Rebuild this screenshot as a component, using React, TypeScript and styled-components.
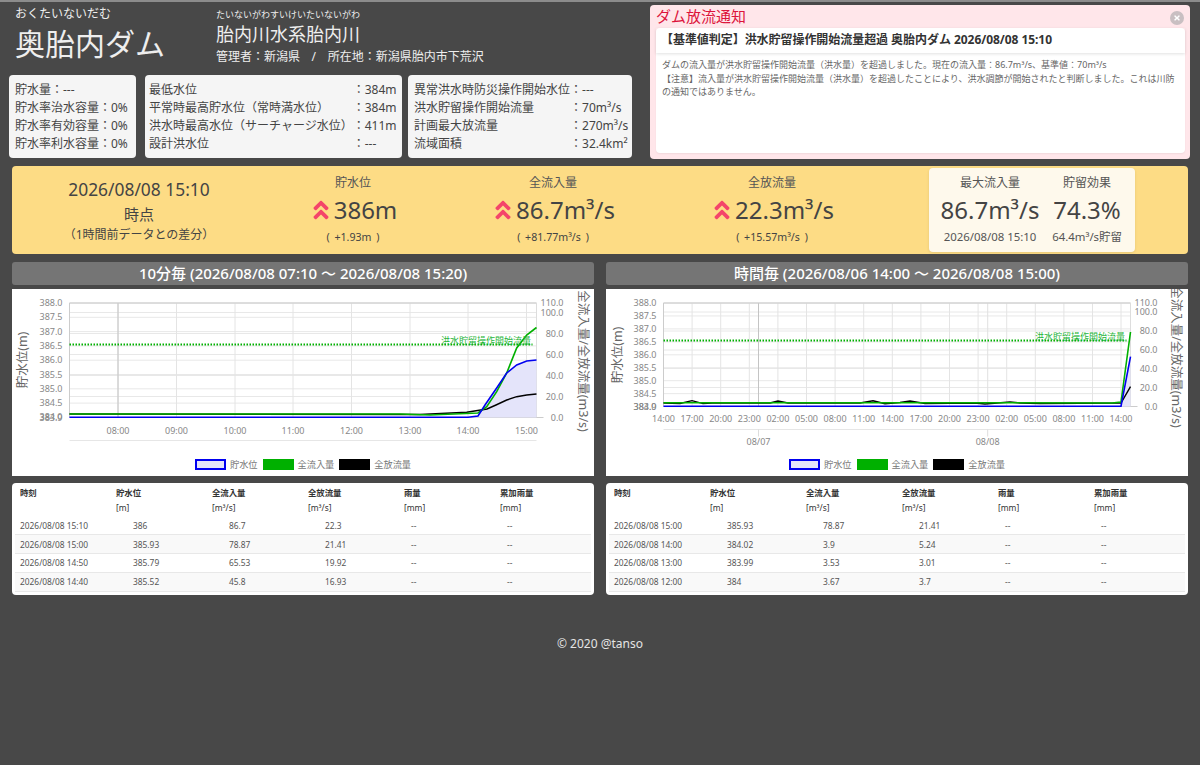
import styled, { createGlobalStyle } from "styled-components";
import { FaAngleDoubleUp, FaTimes } from "react-icons/fa";

const GlobalStyle = createGlobalStyle`
  html, body {
    margin: 0;
    background: #484848;
    font-family: "Noto Sans", "Noto Sans CJK JP", sans-serif;
  }
  * {
    box-sizing: border-box;
  }
`;

const Page = styled.div`
  min-height: 765px;
  border-top: 2px solid #8c8c8c;
  color: #444;
`;

const TopRow = styled.div`
  display: flex;
  height: 164px;
  padding-top: 3px;
`;

const LeftColumn = styled.div`
  width: 650px;
  padding-left: 9px;
`;

const NameRow = styled.div`
  display: flex;
  height: 70px;
  color: #eee;
`;

const DamName = styled.div`
  width: 207px;
  padding-left: 6px;
`;

const Kana = styled.div<{ $size: number }>`
  font-size: ${({ $size }) => $size}px;
  line-height: ${({ $size }) => $size + 3}px;
  padding-top: ${({ $size }) => ($size > 10 ? 1 : 4)}px;
`;

const DamTitle = styled.div`
  font-size: 30px;
  line-height: 44px;
  margin-top: 1px;
`;

const RiverName = styled.div`
  font-size: 18px;
  line-height: 26px;
`;

const Address = styled.div`
  margin-top: 1px;
  font-size: 12px;
  line-height: 18px;
  word-spacing: 8.5px;
`;

const InfoRow = styled.div`
  display: flex;
  gap: 6px;
`;

const InfoCard = styled.div<{ $width: number; $gapLeft?: number; $padLeft?: number }>`
  width: ${({ $width }) => $width}px;
  margin-left: ${({ $gapLeft }) => $gapLeft ?? 0}px;
  height: 83px;
  padding: 6px 0 0 ${({ $padLeft }) => $padLeft ?? 6}px;
  background: #f5f5f5;
  border-radius: 4px;
  font-size: 12px;
  line-height: 18px;
  color: #444;
  white-space: nowrap;
`;

const InfoGrid = styled.div`
  display: grid;
  grid-template-columns: max-content max-content;
`;

const Notice = styled.div`
  position: relative;
  width: 540px;
  height: 154px;
  padding: 0 5px 0 6px;
  background: #ffe6ea;
  border-radius: 4px;
`;

const NoticeTitle = styled.div`
  font-size: 15px;
  line-height: 22px;
  padding-bottom: 1px;
  color: #dc143c;
`;

const CloseButton = styled.div`
  position: absolute;
  top: 6px;
  right: 6px;
  width: 14px;
  height: 14px;
  border-radius: 50%;
  background: #c9bfc2;
  color: #fff;
  font-size: 8px;
  display: flex;
  align-items: center;
  justify-content: center;
`;

const NoticeCard = styled.div`
  height: 125px;
  background: #fff;
  border-radius: 4px;
  box-shadow: 0 1px 2px rgba(0, 0, 0, 0.06);
`;

const NoticeHead = styled.div`
  height: 25px;
  padding-left: 5px;
  font-size: 12px;
  letter-spacing: -0.05px;
  line-height: 24px;
  font-weight: 700;
  color: #333;
  box-shadow: 0 1px 3px rgba(0, 0, 0, 0.12);
`;

const NoticeBody = styled.div`
  padding: 5px 6px;
  font-size: 9px;
  line-height: 13.6px;
  color: #666;
`;

const SummaryBand = styled.div`
  display: flex;
  align-items: center;
  height: 88px;
  margin: 0 12px;
  background: #fddc85;
  border-radius: 4px;
`;

const SummaryCell = styled.div<{ $width: number }>`
  width: ${({ $width }) => $width}px;
  text-align: center;
`;

const DateText = styled.div`
  font-size: 17.4px;
  line-height: 26px;
`;

const PointText = styled.div`
  font-size: 15px;
  line-height: 24px;
`;

const NoteText = styled.div`
  font-size: 12px;
  line-height: 18px;
`;

const MetricLabel = styled.div`
  font-size: 12px;
  line-height: 18px;
  color: #555;
`;

const MetricValue = styled.div`
  display: flex;
  align-items: center;
  justify-content: center;
  gap: 1px;
  font-size: 24px;
  line-height: 30px;
  margin: 3px 0;
  white-space: nowrap;
`;

const UpIcon = styled(FaAngleDoubleUp)`
  color: #f4456a;
  font-size: 24px;
`;

const MetricDiff = styled.div`
  font-size: 10.6px;
  line-height: 18px;
  word-spacing: 2px;
`;

const PeakCard = styled.div`
  display: flex;
  width: 206px;
  height: 84px;
  margin-left: 51px;
  background: #fef9ec;
  border-radius: 4px;
  box-shadow: 0 1px 3px rgba(0, 0, 0, 0.1);
  text-align: center;
  padding-top: 6px;
`;

const PeakCell = styled.div<{ $width: number }>`
  width: ${({ $width }) => $width}px;
`;

const PeakNote = styled.div`
  font-size: 11.4px;
  line-height: 18px;
  color: #555;
  white-space: nowrap;
`;

const Columns = styled.div`
  display: grid;
  grid-template-columns: 582px 582px;
  gap: 12px;
  margin: 8px 12px 0;
`;

const Heading = styled.div`
  height: 23px;
  background: #757575;
  border-radius: 3px;
  color: #fff;
  font-size: 15px;
  font-weight: 500;
  line-height: 22px;
  text-align: center;
`;

const ChartPanel = styled.div`
  height: 187px;
  margin-top: 4px;
  background: #fff;
`;

const ChartSvg = styled.svg`
  display: block;
  overflow: hidden;
`;

const Legend = styled.div`
  display: flex;
  justify-content: center;
  align-items: center;
  height: 18px;
  font-size: 9.2px;
  color: #777;
`;

const LegendSwatch = styled.span<{ $fill: string; $border: string }>`
  width: 31px;
  height: 11px;
  background: ${({ $fill }) => $fill};
  border: 2px solid ${({ $border }) => $border};
  margin-right: 4px;
`;

const LegendLabel = styled.span`
  margin-right: 5px;

  &:last-child {
    margin-right: 0;
  }
`;

const TablePanel = styled.div`
  height: 112px;
  margin-top: 7px;
  padding: 1px 3px 3px;
  background: #fff;
  border-radius: 4px;
`;

const DataTable = styled.table`
  width: 100%;
  table-layout: fixed;
  border-collapse: collapse;
  font-size: 8.4px;
  color: #555;
`;

const HeadCell = styled.th`
  padding: 1px 5px 1px;
  text-align: left;
  font-weight: 700;
  line-height: 15px;
  vertical-align: top;
  color: #333;

  span {
    display: block;
    font-weight: 400;
  }
`;

const BodyRow = styled.tr`
  height: 18.8px;
  border-bottom: 1px solid #e8e8e8;

  &:nth-child(even) {
    background: #f9f9f9;
  }
`;

const BodyCell = styled.td`
  padding: 0 0 0 22px;

  &:first-child {
    padding-left: 5px;
  }

  &:nth-child(n + 5) {
    padding-left: 12px;
  }
`;

const Footer = styled.div`
  margin-top: 40px;
  text-align: center;
  color: #e4e4e4;
  font-size: 12px;
  line-height: 18px;
`;

type Point = [number, number];

type ChartConfig = {
  originX: number;
  left: number;
  right: number;
  bottom: number;
  levelTicks: [string, number][];
  flowTicks: [string, number][];
  timeTicks: [string, number][];
  timeLabelY: number;
  axisY: number;
  dayTicks: [string, number][];
  dayLine: number[];
  limitY: number;
  limitLabelX: number;
  blue: Point[];
  green: Point[];
  black: Point[];
  leftTitleX: number;
  leftTitleY: number;
  rightTitleX: number;
  rightTitleY: number;
};

const toLine = (points: Point[]) => points.map(([x, y]) => `${x},${y}`).join(" ");

function WaterChart({ config }: { config: ChartConfig }) {
  const {
    originX,
    left,
    right,
    bottom,
    levelTicks,
    flowTicks,
    timeTicks,
    timeLabelY,
    axisY,
    dayTicks,
    dayLine,
    limitY,
    limitLabelX,
    blue,
    green,
    black,
    leftTitleX,
    leftTitleY,
    rightTitleX,
    rightTitleY,
  } = config;
  const top = 303;
  const area = [...blue, [right, bottom], [left, bottom]] as Point[];

  return (
    <ChartSvg width={582} height={166} viewBox={`${originX} 289 582 166`}>
      {[...levelTicks, ...flowTicks].map(([label, y], i) => (
        <line key={label + i} x1={left} x2={right} y1={y} y2={y} stroke="#e8e8e8" />
      ))}
      {timeTicks.map(([label, x], i) => (
        <line key={label + i} x1={x} x2={x} y1={top} y2={bottom} stroke="#e4e4e4" />
      ))}
      {dayTicks.map(([label, x]) => (
        <line key={label} x1={x} x2={x} y1={top} y2={bottom} stroke="#e0e0e0" />
      ))}
      {dayLine.map((x) => (
        <line key={x} x1={x} x2={x} y1={top} y2={bottom} stroke="#c4c4c4" />
      ))}
      <line x1={left} x2={left} y1={top} y2={bottom} stroke="#ccc" />
      <line x1={left} x2={right} y1={top} y2={top} stroke="#ccc" />
      <line x1={right} x2={right} y1={top} y2={bottom} stroke="#ddd" />
      <line x1={left} x2={right + 7} y1={bottom} y2={bottom} stroke="#ccc" />
      <line x1={left} x2={right} y1={axisY} y2={axisY} stroke="#e6e6e6" />
      {dayTicks.map(([label, x]) => (
        <line key={label} x1={x} x2={x} y1={axisY} y2={axisY + 7} stroke="#ddd" />
      ))}

      <polygon points={toLine(area)} fill="#e4e4fa" />
      <line
        x1={left}
        x2={right - 4}
        y1={limitY}
        y2={limitY}
        stroke="#00b000"
        strokeWidth={2}
        strokeDasharray="1.5 1.5"
      />
      <polyline points={toLine(black)} fill="none" stroke="#000" strokeWidth={1.4} />
      <polyline points={toLine(green)} fill="none" stroke="#00b000" strokeWidth={1.6} />
      <polyline points={toLine(blue)} fill="none" stroke="#0000f0" strokeWidth={1.6} />

      <g fontSize={9} fill="#888">
        {levelTicks.map(([label, y]) => (
          <text key={label} x={left - 7} y={y + 3} textAnchor="end">
            {label}
          </text>
        ))}
        {flowTicks.map(([label, y]) => (
          <text key={label} x={right + 27} y={y + 3} textAnchor="end">
            {label}
          </text>
        ))}
        {timeTicks.map(([label, x], i) => (
          <text key={label + i} x={x} y={timeLabelY} textAnchor="middle">
            {label}
          </text>
        ))}
        {dayTicks.map(([label, x]) => (
          <text key={label} x={x} y={axisY + 15} textAnchor="middle">
            {label}
          </text>
        ))}
      </g>
      <text x={limitLabelX} y={limitY - 0.5} fontSize={9} fill="#1fb53a" textAnchor="end">
        洪水貯留操作開始流量
      </text>
      <text
        fontSize={12.5}
        fill="#666"
        textAnchor="middle"
        transform={`translate(${leftTitleX} ${leftTitleY}) rotate(-90)`}
      >
        貯水位(m)
      </text>
      <text
        fontSize={12.5}
        fill="#666"
        textAnchor="middle"
        transform={`translate(${rightTitleX} ${rightTitleY}) rotate(90)`}
      >
        全流入量/全放流量(m3/s)
      </text>
    </ChartSvg>
  );
}

const LEVEL_LABELS = ["388.0", "387.5", "387.0", "386.5", "386.0", "385.5", "385.0", "384.5", "384.0"];

const tenMinuteChart: ChartConfig = {
  originX: 12,
  left: 69.5,
  right: 536.5,
  bottom: 417.5,
  levelTicks: [...LEVEL_LABELS.map((l, i) => [l, 303 + i * 14.3] as [string, number]), ["383.9", 417.5]],
  flowTicks: [
    ["110.0", 303],
    ["100.0", 312.5],
    ["80.0", 333.5],
    ["60.0", 354.5],
    ["40.0", 375.5],
    ["20.0", 396.5],
    ["0.0", 417.5],
  ],
  timeTicks: [
    ["08:00", 118],
    ["09:00", 176.5],
    ["10:00", 235],
    ["11:00", 293],
    ["12:00", 351.5],
    ["13:00", 410],
    ["14:00", 468],
    ["15:00", 526.5],
  ],
  timeLabelY: 434,
  axisY: 440.5,
  dayTicks: [],
  dayLine: [118],
  limitY: 344.5,
  limitLabelX: 531,
  blue: [
    [69.5, 417.3],
    [468, 417.3],
    [478, 416],
    [485, 405],
    [496, 389],
    [506.7, 373],
    [516.7, 365],
    [526.7, 361],
    [536.5, 360],
  ],
  green: [
    [69.5, 414],
    [400, 414],
    [430, 415],
    [478, 413],
    [486.7, 406.7],
    [496.7, 391.7],
    [506.7, 373],
    [516.7, 348],
    [526.7, 335],
    [536.5, 327.5],
  ],
  black: [
    [69.5, 414],
    [420, 414.5],
    [466.7, 412.3],
    [487, 409],
    [496, 405],
    [506.7, 400],
    [516.7, 396.7],
    [526.7, 395],
    [536.5, 394],
  ],
  leftTitleX: 27,
  leftTitleY: 360,
  rightTitleX: 579,
  rightTitleY: 361,
};

const HOUR_LABELS = ["14:00", "17:00", "20:00", "23:00", "02:00", "05:00", "08:00", "11:00"];

const hourlyChart: ChartConfig = {
  originX: 606,
  left: 663.5,
  right: 1130.5,
  bottom: 406.5,
  levelTicks: [...LEVEL_LABELS.map((l, i) => [l, 303 + i * 12.95] as [string, number]), ["383.9", 406.5]],
  flowTicks: [
    ["110.0", 303],
    ["100.0", 312],
    ["80.0", 331],
    ["60.0", 350],
    ["40.0", 368.5],
    ["20.0", 387.5],
    ["0.0", 406.5],
  ],
  timeTicks: [
    ...[...HOUR_LABELS, ...HOUR_LABELS].map((l, i) => [l, 663.5 + i * 28.6] as [string, number]),
    ["14:00", 1121],
  ],
  timeLabelY: 422,
  axisY: 429.5,
  dayTicks: [
    ["08/07", 758.5],
    ["08/08", 987.7],
  ],
  dayLine: [758.5],
  limitY: 340.5,
  limitLabelX: 1125,
  blue: [
    [663.5, 406.2],
    [1121, 406.2],
    [1130.5, 356.7],
  ],
  green: [
    [663.5, 402.7],
    [1000, 402.7],
    [1112, 403],
    [1121, 402],
    [1130.5, 332],
  ],
  black: [
    [663.5, 403],
    [680, 403.5],
    [692, 400.6],
    [703, 403.6],
    [712, 403],
    [770, 403],
    [778, 401],
    [788, 403],
    [860, 403],
    [873, 400.8],
    [885, 403.8],
    [900, 402.5],
    [910, 401],
    [925, 403.5],
    [975, 403],
    [985, 404],
    [1010, 402],
    [1020, 403],
    [1040, 403.5],
    [1121, 403],
    [1130.5, 386.7],
  ],
  leftTitleX: 622,
  leftTitleY: 355,
  rightTitleX: 1172,
  rightTitleY: 357,
};

function ChartLegend() {
  return (
    <Legend>
      <LegendSwatch $fill="#e4e4fa" $border="#0000f0" />
      <LegendLabel>貯水位</LegendLabel>
      <LegendSwatch $fill="#00b000" $border="#00b000" />
      <LegendLabel>全流入量</LegendLabel>
      <LegendSwatch $fill="#000" $border="#000" />
      <LegendLabel>全放流量</LegendLabel>
    </Legend>
  );
}

const TABLE_HEAD: [string, string][] = [
  ["時刻", ""],
  ["貯水位", "[m]"],
  ["全流入量", "[m³/s]"],
  ["全放流量", "[m³/s]"],
  ["雨量", "[mm]"],
  ["累加雨量", "[mm]"],
];

function ReadingsTable({ rows }: { rows: string[][] }) {
  return (
    <TablePanel>
      <DataTable>
        <thead>
          <tr>
            {TABLE_HEAD.map(([name, unit]) => (
              <HeadCell key={name}>
                {name}
                <span>{unit || "\u00a0"}</span>
              </HeadCell>
            ))}
          </tr>
        </thead>
        <tbody>
          {rows.map((row) => (
            <BodyRow key={row[0]}>
              {row.map((value, i) => (
                <BodyCell key={i}>{value}</BodyCell>
              ))}
              <BodyCell>--</BodyCell>
              <BodyCell>--</BodyCell>
            </BodyRow>
          ))}
        </tbody>
      </DataTable>
    </TablePanel>
  );
}

function Metric({ label, value, diff, width }: { label: string; value: string; diff: string; width: number }) {
  return (
    <SummaryCell $width={width}>
      <MetricLabel>{label}</MetricLabel>
      <MetricValue>
        <UpIcon />
        {value}
      </MetricValue>
      <MetricDiff>( {diff} )</MetricDiff>
    </SummaryCell>
  );
}

export default function App() {
  return (
    <Page>
      <GlobalStyle />
      <TopRow>
        <LeftColumn>
          <NameRow>
            <DamName>
              <Kana $size={12}>おくたいないだむ</Kana>
              <DamTitle>奥胎内ダム</DamTitle>
            </DamName>
            <div>
              <Kana $size={9}>たいないがわすいけいたいないがわ</Kana>
              <RiverName>胎内川水系胎内川</RiverName>
              <Address>管理者：新潟県 / 所在地：新潟県胎内市下荒沢</Address>
            </div>
          </NameRow>
          <InfoRow>
            <InfoCard $width={127}>
              <div>貯水量：---</div>
              <div>貯水率治水容量：0%</div>
              <div>貯水率有効容量：0%</div>
              <div>貯水率利水容量：0%</div>
            </InfoCard>
            <InfoCard $width={257} $gapLeft={3} $padLeft={4}>
              <InfoGrid>
                <span>最低水位</span>
                <span>：384m</span>
                <span>平常時最高貯水位（常時満水位）</span>
                <span>：384m</span>
                <span>洪水時最高水位（サーチャージ水位）</span>
                <span>：411m</span>
                <span>設計洪水位</span>
                <span>：---</span>
              </InfoGrid>
            </InfoCard>
            <InfoCard $width={224}>
              <InfoGrid>
                <span>異常洪水時防災操作開始水位</span>
                <span>：---</span>
                <span>洪水貯留操作開始流量</span>
                <span>：70m³/s</span>
                <span>計画最大放流量</span>
                <span>：270m³/s</span>
                <span>流域面積</span>
                <span>：32.4km²</span>
              </InfoGrid>
            </InfoCard>
          </InfoRow>
        </LeftColumn>
        <Notice>
          <NoticeTitle>ダム放流通知</NoticeTitle>
          <CloseButton>
            <FaTimes />
          </CloseButton>
          <NoticeCard>
            <NoticeHead>【基準値判定】洪水貯留操作開始流量超過 奥胎内ダム 2026/08/08 15:10</NoticeHead>
            <NoticeBody>
              ダムの流入量が洪水貯留操作開始流量（洪水量）を超過しました。現在の流入量：86.7m³/s、基準値：70m³/s
              <br />
              【注意】流入量が洪水貯留操作開始流量（洪水量）を超過したことにより、洪水調節が開始されたと判断しました。これは川防の通知ではありません。
            </NoticeBody>
          </NoticeCard>
        </Notice>
      </TopRow>

      <SummaryBand>
        <SummaryCell $width={254}>
          <DateText>2026/08/08 15:10</DateText>
          <PointText>時点</PointText>
          <NoteText>（1時間前データとの差分）</NoteText>
        </SummaryCell>
        <Metric label="貯水位" value="386m" diff="+1.93m" width={174} />
        <Metric label="全流入量" value="86.7m³/s" diff="+81.77m³/s" width={226} />
        <Metric label="全放流量" value="22.3m³/s" diff="+15.57m³/s" width={212} />
        <PeakCard>
          <PeakCell $width={122}>
            <MetricLabel>最大流入量</MetricLabel>
            <MetricValue>86.7m³/s</MetricValue>
            <PeakNote>2026/08/08 15:10</PeakNote>
          </PeakCell>
          <PeakCell $width={72}>
            <MetricLabel>貯留効果</MetricLabel>
            <MetricValue>74.3%</MetricValue>
            <PeakNote>64.4m³/s貯留</PeakNote>
          </PeakCell>
        </PeakCard>
      </SummaryBand>

      <Columns>
        <div>
          <Heading>10分毎 (2026/08/08 07:10 〜 2026/08/08 15:20)</Heading>
          <ChartPanel>
            <WaterChart config={tenMinuteChart} />
            <ChartLegend />
          </ChartPanel>
          <ReadingsTable
            rows={[
              ["2026/08/08 15:10", "386", "86.7", "22.3"],
              ["2026/08/08 15:00", "385.93", "78.87", "21.41"],
              ["2026/08/08 14:50", "385.79", "65.53", "19.92"],
              ["2026/08/08 14:40", "385.52", "45.8", "16.93"],
            ]}
          />
        </div>
        <div>
          <Heading>時間毎 (2026/08/06 14:00 〜 2026/08/08 15:00)</Heading>
          <ChartPanel>
            <WaterChart config={hourlyChart} />
            <ChartLegend />
          </ChartPanel>
          <ReadingsTable
            rows={[
              ["2026/08/08 15:00", "385.93", "78.87", "21.41"],
              ["2026/08/08 14:00", "384.02", "3.9", "5.24"],
              ["2026/08/08 13:00", "383.99", "3.53", "3.01"],
              ["2026/08/08 12:00", "384", "3.67", "3.7"],
            ]}
          />
        </div>
      </Columns>
      <Footer>© 2020 @tanso</Footer>
    </Page>
  );
}
